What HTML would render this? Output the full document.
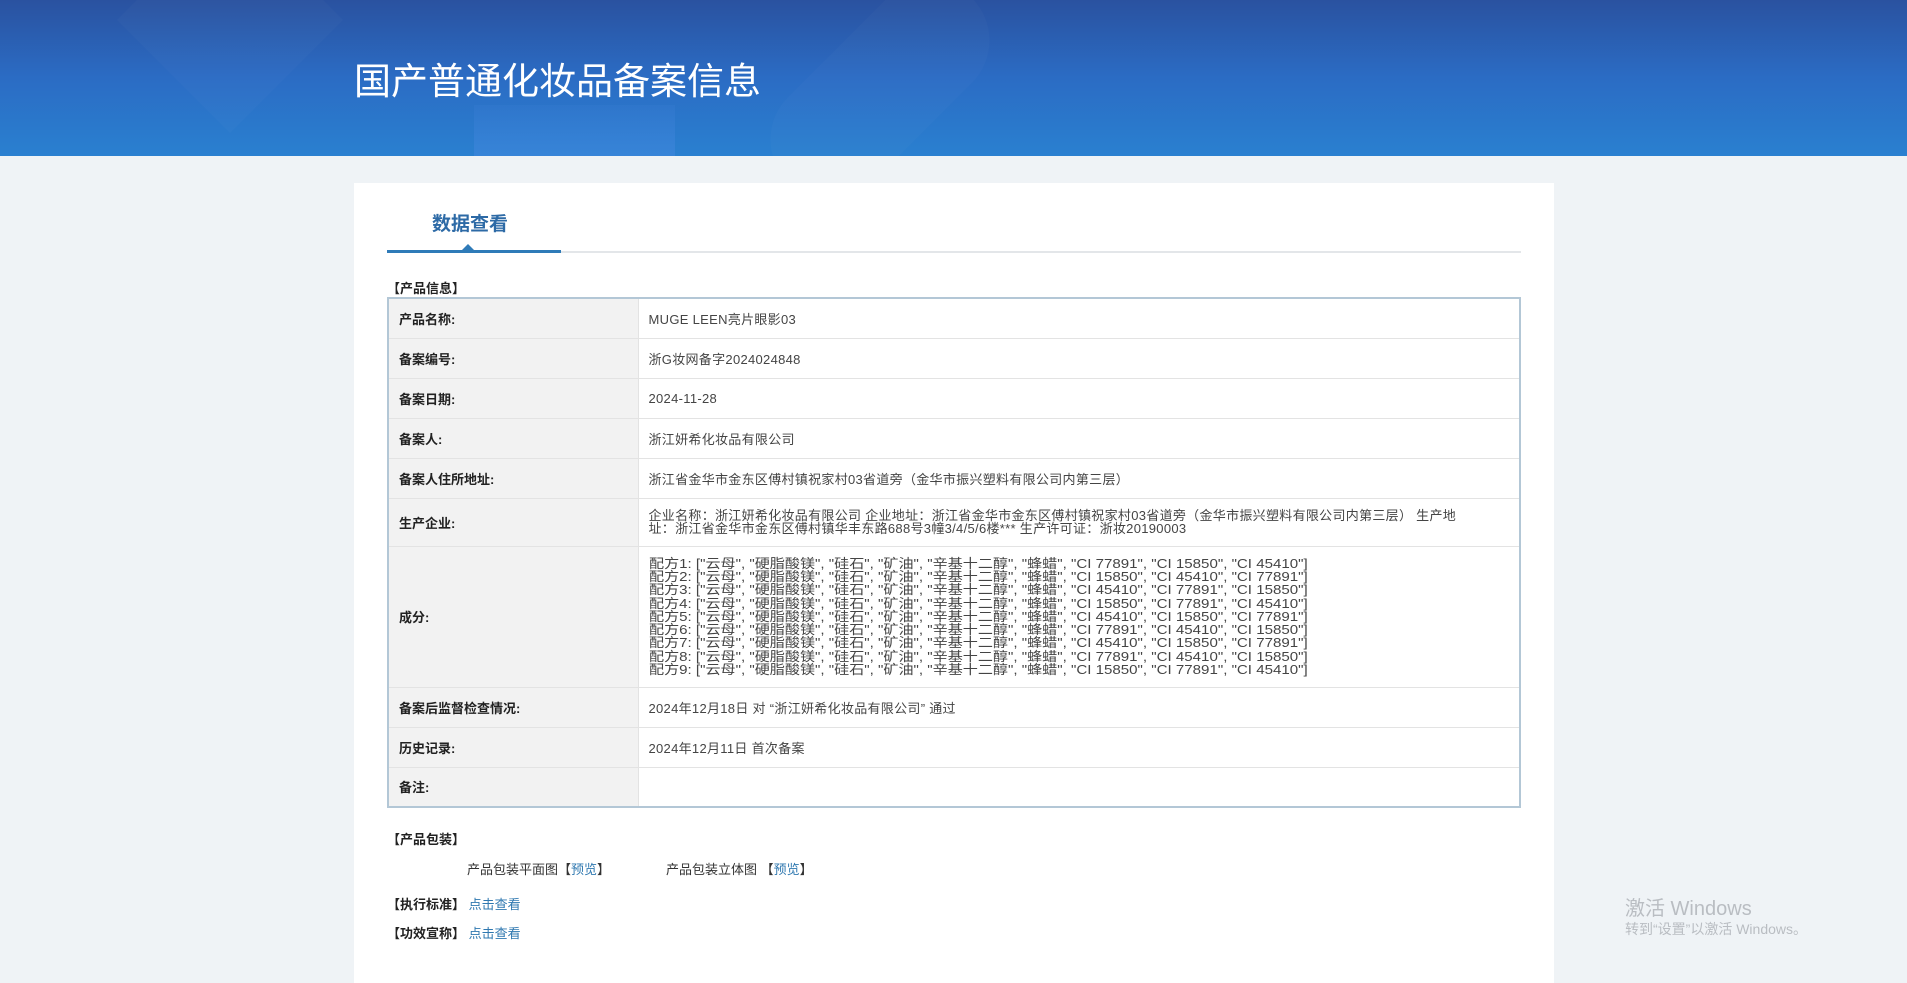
<!DOCTYPE html>
<html><head><meta charset="utf-8"><style>
*{margin:0;padding:0;box-sizing:border-box}
body{width:1907px;height:974px;background:#eff3f6;font-family:"Liberation Sans","Noto Sans CJK SC",sans-serif;color:#333;position:relative;overflow:hidden}
.hd{position:absolute;left:0;top:0;width:1907px;height:156px;background:linear-gradient(180deg,#2a52a0 0%,#2b6cc4 50%,#2a80d0 100%);overflow:hidden}
.hd .s1{position:absolute;left:474px;top:105px;width:201px;height:60px;background:linear-gradient(180deg,rgba(80,140,230,.1),rgba(80,140,230,.4))}
.hd .s2{position:absolute;left:150px;top:-60px;width:160px;height:160px;transform:rotate(45deg);background:rgba(255,255,255,.02)}
.hd .s3{position:absolute;left:820px;top:-40px;width:120px;height:260px;transform:rotate(45deg);border-radius:60px;background:rgba(255,255,255,.02)}
.hd h1{position:absolute;left:354px;top:58px;font-size:37px;font-weight:normal;color:#fff;line-height:48px}
.card{position:absolute;left:354px;top:183px;width:1200px;height:800px;background:#fff}
.tab{position:absolute;left:432px;top:209px;font-size:19px;font-weight:bold;color:#2d6aa6}
.ln{position:absolute;left:387px;top:251px;width:1134px;height:2px;background:#e3e6e9}
.ln2{position:absolute;left:387px;top:250px;width:174px;height:3px;background:#2f7bb8}
.tri{position:absolute;left:462px;top:244px;width:0;height:0;border-left:6px solid transparent;border-right:6px solid transparent;border-bottom:6px solid #2f7bb8}
.sec{position:absolute;font-size:13px;font-weight:bold;color:#222}
table{position:absolute;left:387px;top:297px;width:1134px;border-collapse:collapse;border:2px solid #b3c7d6;font-size:13px}
td{border-bottom:1px solid #e3e3e3;vertical-align:middle}
td.l{width:250px;background:#f2f2f2;font-weight:bold;padding-left:10px;color:#222;border-right:1px solid #e3e3e3}
td.v{padding-left:10px;color:#444;font-size:13px;letter-spacing:0.3px}
.ing{line-height:13.3px;font-size:13px;letter-spacing:0;transform:scaleX(1.16);transform-origin:left;white-space:nowrap}
a{color:#2f78b0;text-decoration:none}
.t{position:absolute;font-size:13px;color:#333}
.wm{position:absolute;left:1625px;color:#b9bdc2}
</style></head><body>
<div class="hd"><div class="s2"></div><div class="s3"></div><div class="s1"></div><h1>国产普通化妆品备案信息</h1></div>
<div class="card"></div>
<div class="tab">数据查看</div>
<div class="ln"></div><div class="ln2"></div><div class="tri"></div>
<div class="sec" style="left:387px;top:278px">【产品信息】</div>
<table>
<tr style="height:40px"><td class="l">产品名称:</td><td class="v">MUGE LEEN亮片眼影03</td></tr>
<tr style="height:40px"><td class="l">备案编号:</td><td class="v">浙G妆网备字2024024848</td></tr>
<tr style="height:40px"><td class="l">备案日期:</td><td class="v">2024-11-28</td></tr>
<tr style="height:40px"><td class="l">备案人:</td><td class="v">浙江妍希化妆品有限公司</td></tr>
<tr style="height:40px"><td class="l">备案人住所地址:</td><td class="v">浙江省金华市金东区傅村镇祝家村03省道旁（金华市振兴塑料有限公司内第三层）</td></tr>
<tr style="height:48px"><td class="l">生产企业:</td><td class="v" style="line-height:13px">企业名称：浙江妍希化妆品有限公司 企业地址：浙江省金华市金东区傅村镇祝家村03省道旁（金华市振兴塑料有限公司内第三层） 生产地<br>址：浙江省金华市金东区傅村镇华丰东路688号3幢3/4/5/6楼*** 生产许可证：浙妆20190003</td></tr>
<tr style="height:141px"><td class="l">成分:</td><td class="v"><div class="ing">配方1: ["云母", "硬脂酸镁", "硅石", "矿油", "辛基十二醇", "蜂蜡", "CI 77891", "CI 15850", "CI 45410"]<br>配方2: ["云母", "硬脂酸镁", "硅石", "矿油", "辛基十二醇", "蜂蜡", "CI 15850", "CI 45410", "CI 77891"]<br>配方3: ["云母", "硬脂酸镁", "硅石", "矿油", "辛基十二醇", "蜂蜡", "CI 45410", "CI 77891", "CI 15850"]<br>配方4: ["云母", "硬脂酸镁", "硅石", "矿油", "辛基十二醇", "蜂蜡", "CI 15850", "CI 77891", "CI 45410"]<br>配方5: ["云母", "硬脂酸镁", "硅石", "矿油", "辛基十二醇", "蜂蜡", "CI 45410", "CI 15850", "CI 77891"]<br>配方6: ["云母", "硬脂酸镁", "硅石", "矿油", "辛基十二醇", "蜂蜡", "CI 77891", "CI 45410", "CI 15850"]<br>配方7: ["云母", "硬脂酸镁", "硅石", "矿油", "辛基十二醇", "蜂蜡", "CI 45410", "CI 15850", "CI 77891"]<br>配方8: ["云母", "硬脂酸镁", "硅石", "矿油", "辛基十二醇", "蜂蜡", "CI 77891", "CI 45410", "CI 15850"]<br>配方9: ["云母", "硬脂酸镁", "硅石", "矿油", "辛基十二醇", "蜂蜡", "CI 15850", "CI 77891", "CI 45410"]</div></td></tr>
<tr style="height:40px"><td class="l">备案后监督检查情况:</td><td class="v">2024年12月18日 对 “浙江妍希化妆品有限公司” 通过</td></tr>
<tr style="height:40px"><td class="l">历史记录:</td><td class="v">2024年12月11日 首次备案</td></tr>
<tr style="height:40px"><td class="l">备注:</td><td class="v"></td></tr>
</table>
<div class="sec" style="left:387px;top:829px">【产品包装】</div>
<div class="t" style="left:467px;top:859px">产品包装平面图【<a>预览</a>】</div>
<div class="t" style="left:666px;top:859px">产品包装立体图 【<a>预览</a>】</div>
<div class="sec" style="left:387px;top:894px">【执行标准】 <a style="font-weight:normal">点击查看</a></div>
<div class="sec" style="left:387px;top:923px">【功效宣称】 <a style="font-weight:normal">点击查看</a></div>
<div class="wm" style="top:892px;font-size:20px">激活 Windows</div>
<div class="wm" style="top:919px;font-size:14px">转到“设置”以激活 Windows。</div>
</body></html>
